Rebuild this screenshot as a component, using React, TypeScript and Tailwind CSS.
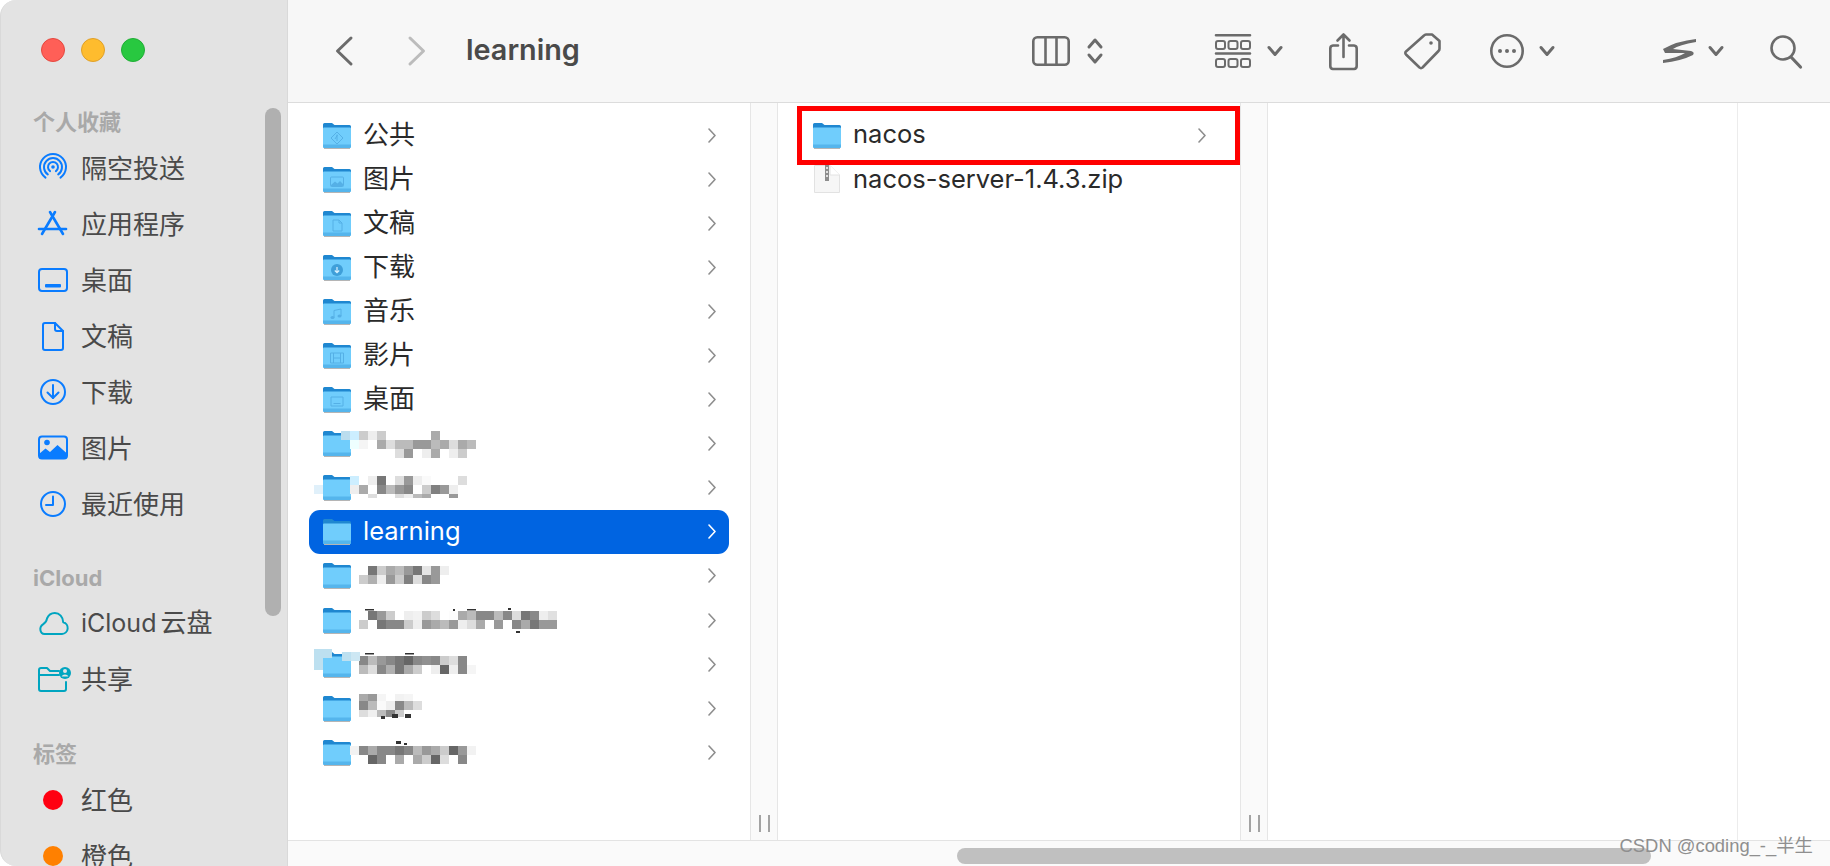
import type { ReactNode } from "react";

const BLUE = "#0a7cff";
const TEAL = "#00a5c0";
const TOOL = "#6b6b6b";

// icons for the sidebar, all in a 30x30 box
function SideIcon({ children, color = BLUE }: { children: ReactNode; color?: string }) {
  return (
    <svg width="30" height="30" viewBox="0 0 30 30" fill="none" stroke={color} strokeWidth="2" strokeLinecap="round" strokeLinejoin="round" className="shrink-0 overflow-visible">
      {children}
    </svg>
  );
}

const sideIcons: Record<string, ReactNode> = {
  airdrop: (
    <SideIcon>
      <path d="M7.5 24.6A13 13 0 1 1 22.5 24.6" />
      <path d="M9.8 21.4A9 9 0 1 1 20.2 21.4" />
      <path d="M12.1 18.1A5 5 0 1 1 17.9 18.1" />
      <circle cx="15" cy="14" r="1.8" fill={BLUE} stroke="none" />
    </SideIcon>
  ),
  apps: (
    <SideIcon>
      <g strokeWidth="2.6">
        <path d="M12 3L25 25" />
        <path d="M17 3L4 25" />
        <path d="M1 20H28" />
      </g>
    </SideIcon>
  ),
  desktop: (
    <SideIcon>
      <rect x="1" y="4" width="28" height="22" rx="3" />
      <rect x="7" y="19" width="16" height="3.6" rx="1" fill={BLUE} stroke="none" />
    </SideIcon>
  ),
  doc: (
    <SideIcon>
      <path d="M7 2H17L25 10V27A2 2 0 0 1 23 29H7A2 2 0 0 1 5 27V4A2 2 0 0 1 7 2Z" />
      <path d="M17 2V8A2 2 0 0 0 19 10H25" />
    </SideIcon>
  ),
  download: (
    <SideIcon>
      <circle cx="15" cy="15" r="12" />
      <path d="M15 8V21" />
      <path d="M9.5 15.5L15 21L20.5 15.5" />
    </SideIcon>
  ),
  photo: (
    <SideIcon>
      <rect x="1" y="3.5" width="28" height="22" rx="3" />
      <circle cx="9" cy="9.5" r="2.8" fill={BLUE} stroke="none" />
      <path d="M1 21L7.5 15.5L12 19L19.5 12L29 20.5V24A2 2 0 0 1 27 26H3A2 2 0 0 1 1 24Z" fill={BLUE} stroke="none" />
    </SideIcon>
  ),
  clock: (
    <SideIcon>
      <circle cx="15" cy="15" r="12" />
      <path d="M15 7.5V16H8" />
    </SideIcon>
  ),
  cloud: (
    <SideIcon color={TEAL}>
      <path d="M6.5 26H24A6 6 0 0 0 25.2 14.2C25 9 21.5 5 16.8 5C13 5 10.3 7.3 9 10.5C8.7 13 8 14.4 5 16.3C0.8 19 1.8 26 6.5 26Z" />
    </SideIcon>
  ),
  shared: (
    <SideIcon color={TEAL}>
      <path d="M1 8V25A2 2 0 0 0 3 27H26A2 2 0 0 0 28 25V18" />
      <path d="M1 8V6A2 2 0 0 1 3 4H9L12 7H21" />
      <path d="M1 11H21" />
      <circle cx="27" cy="9" r="6" fill={TEAL} stroke="none" />
      <circle cx="27" cy="7" r="2" fill="#e3e3e3" stroke="none" />
      <path d="M23.6 12.4A3.6 3 0 0 1 30.4 12.4Z" fill="#e3e3e3" stroke="none" />
    </SideIcon>
  ),
};

type SideRow = { kind: "head"; label: string; h: string; pb: string } | { kind: "item"; label: ReactNode; icon: ReactNode };

const sideRows: SideRow[] = [
  { kind: "head", label: "个人收藏", h: "h-[40px]", pb: "pb-[4px]" },
  { kind: "item", label: "隔空投送", icon: sideIcons.airdrop },
  { kind: "item", label: "应用程序", icon: sideIcons.apps },
  { kind: "item", label: "桌面", icon: sideIcons.desktop },
  { kind: "item", label: "文稿", icon: sideIcons.doc },
  { kind: "item", label: "下载", icon: sideIcons.download },
  { kind: "item", label: "图片", icon: sideIcons.photo },
  { kind: "item", label: "最近使用", icon: sideIcons.clock },
  { kind: "head", label: "iCloud", h: "h-[63px]", pb: "pb-[3px]" },
  {
    kind: "item",
    label: (
      <>
        <span className="text-[25px] mr-[4px]">iCloud</span>云盘
      </>
    ),
    icon: sideIcons.cloud,
  },
  { kind: "item", label: "共享", icon: sideIcons.shared },
  { kind: "head", label: "标签", h: "h-[65px]", pb: "pb-[4px]" },
  { kind: "item", label: "红色", icon: <div className="w-[20px] h-[20px] mx-[5px] shrink-0 rounded-full bg-[#ff0011]" /> },
  { kind: "item", label: "橙色", icon: <div className="w-[20px] h-[20px] mx-[5px] shrink-0 rounded-full bg-[#ff8000]" /> },
];

function Sidebar() {
  return (
    <aside className="relative w-[288px] shrink-0 h-full overflow-hidden rounded-l-[16px] bg-[#e3e3e3] border-l border-r border-[#d9d9d9]">
      {/* traffic lights */}
      <div className="h-[100px] flex items-center gap-[16px] pl-[40px]">
        <div className="w-[24px] h-[24px] rounded-full bg-[#ff5f57] border border-[#e5483f]" />
        <div className="w-[24px] h-[24px] rounded-full bg-[#febc2e] border border-[#e0a028]" />
        <div className="w-[24px] h-[24px] rounded-full bg-[#28c840] border border-[#20ae35]" />
      </div>
      {sideRows.map((r, i) =>
        r.kind === "head" ? (
          <div key={i} className={`${r.h} ${r.pb} flex items-end pl-[32px] text-[22px] leading-[28px] font-bold text-[#a9a9a9]`}>
            {r.label}
          </div>
        ) : (
          <div key={i} className="h-[56px] flex items-center gap-[13px] pl-[37px] text-[26px] text-[#4a4a4a] whitespace-nowrap">
            {r.icon}
            <span>{r.label}</span>
          </div>
        )
      )}
      {/* scrollbar */}
      <div className="absolute left-[264px] top-[108px] w-[16px] h-[508px] rounded-full bg-[#b0b0b0]" />
    </aside>
  );
}

const G = "#55b0e6";

const folderGlyphs: Record<string, ReactNode> = {
  apps: (
    <g fill="none" stroke={G} strokeWidth="1">
      <path d="M14 10L20 16L14 22L8 16Z" />
      <path d="M14 12.5V19M12 17L14.5 13" />
    </g>
  ),
  pic: (
    <g stroke={G} strokeWidth="1" fill="none">
      <rect x="7.5" y="11" width="13" height="9.5" rx="1" />
      <path d="M8 19L12 15.5L14.5 17.5L17 15L20 18V20H8Z" fill={G} stroke="none" />
    </g>
  ),
  doc: <path d="M10 10H16L19 13V21H10ZM16 10V13H19" fill="none" stroke={G} strokeWidth="1" />,
  down: (
    <g>
      <circle cx="14" cy="16" r="6" fill="#3f9fd9" />
      <path d="M14 13V18.5M11.8 16.5L14 18.7L16.2 16.5" fill="none" stroke="#d8f1ff" strokeWidth="1.2" />
    </g>
  ),
  music: (
    <g fill={G}>
      <path d="M11 19.5V12.5L18 11V18" fill="none" stroke={G} strokeWidth="1" />
      <ellipse cx="9.5" cy="19.5" rx="2" ry="1.5" />
      <ellipse cx="16.5" cy="18" rx="2" ry="1.5" />
    </g>
  ),
  film: <path d="M7.5 11H20.5V21H7.5ZM10.5 11V21M17.5 11V21M10.5 16H17.5" fill="none" stroke={G} strokeWidth="1" />,
  desk: <path d="M8 11H20V20H8ZM10.5 17.5H17.5" fill="none" stroke={G} strokeWidth="1" />,
};

function Folder({ glyph }: { glyph?: string }) {
  return (
    <svg width="28" height="27" viewBox="0 0 28 27" className="shrink-0">
      <path d="M0 2.5A1.5 1.5 0 0 1 1.5 1H9L11.5 3H26.5A1.5 1.5 0 0 1 28 4.5V12H0Z" fill="#1f87d0" />
      <path d="M0 6.5A1 1 0 0 1 1 5.5H27A1 1 0 0 1 28 6.5V24.5A1.5 1.5 0 0 1 26.5 26H1.5A1.5 1.5 0 0 1 0 24.5Z" fill="#70cdfc" />
      <path d="M0 22.5H28V24.5A1.5 1.5 0 0 1 26.5 26H1.5A1.5 1.5 0 0 1 0 24.5Z" fill="#55b5ec" />
      <path d="M1 26.5H27" stroke="#b5b5b5" strokeWidth="1" />
      {glyph && folderGlyphs[glyph]}
    </svg>
  );
}

function Chevron({ color = "#8e8e8e" }: { color?: string }) {
  return (
    <svg width="8" height="15" viewBox="0 0 8 15" fill="none" stroke={color} strokeWidth="1.6" strokeLinecap="round" strokeLinejoin="round" className="shrink-0">
      <path d="M1 1L7 7.5L1 14" />
    </svg>
  );
}

function ZipIcon() {
  return (
    <svg width="26" height="28" viewBox="0 0 26 28" className="shrink-0">
      <path d="M0.5 0.5H16L25.5 10V27.5H0.5Z" fill="#f6f6f6" stroke="#e2e2e2" />
      <path d="M16 0.5V10H25.5" fill="#ffffff" stroke="#e2e2e2" />
      <rect x="11" y="0" width="4" height="16" fill="#8d8d8d" />
      <rect x="12" y="2" width="2" height="2" fill="#e0e0e0" />
      <rect x="12" y="6" width="2" height="2" fill="#e0e0e0" />
      <rect x="12" y="10" width="2" height="2" fill="#e0e0e0" />
    </svg>
  );
}

type ListRow = { label?: string; glyph?: string; selected?: boolean };

const firstColumn: ListRow[] = [
  { label: "公共", glyph: "apps" },
  { label: "图片", glyph: "pic" },
  { label: "文稿", glyph: "doc" },
  { label: "下载", glyph: "down" },
  { label: "音乐", glyph: "music" },
  { label: "影片", glyph: "film" },
  { label: "桌面", glyph: "desk" },
  {},
  {},
  { label: "learning", selected: true },
  {},
  {},
  {},
  {},
  {},
];

// mosaic over the blurred folder names, page coordinates: [y, height, first x, cell colours]
const mosaic: [number, number, number, string][] = [
  [431, 9, 341, "bde cef ccc eee ccc fff - - - - aaa - - fff"],
  [440, 9, 350, "eff f5f5f5 - aaa ddd bbb bbb 999 999 bbb aaa ddd aaa bbb"],
  [449, 9, 395, "ddd 999 - eee aaa - eee ccc fff"],
  [476, 9, 350, "cef - eee 777 fff ddd 999 eee fafafa - - - ddd"],
  [485, 9, 350, "eee aaa fff 888 bbb 999 888 fff ccc 808080 999 eee"],
  [494, 4, 368, "ddd - - ddd eee bbb aaa - - 999"],
  [485, 9, 314, "e0f0fa"],
  [566, 9, 368, "777 ccc aaa bbb 999 777 e5e5e5 999 eee"],
  [575, 9, 359, "ccc b0b0b0 eee 999 ccc 808080 ddd 888 999"],
  [611, 9, 368, "777 999 ccc - eee f2f2f2 ccc ddd - fcfcfc aaa bbb 888 888 bbb 888 ddd 777 888 eee e0e0e0"],
  [620, 9, 359, "ccc - 777 888 888 ccc eee 999 aaa bbb 999 eee ddd aaa - 999 - 888 aaa 777 999 999"],
  [656, 9, 359, "888 bbb 999 888 777 666 888 909090 888 ccc ddd 888"],
  [665, 9, 359, "bbb ddd 888 b0b0b0 777 aaa ccc - eee 666 eee 888 f5f5f5"],
  [649, 9, 314, "bde0f0 bde0f0"],
  [658, 12, 314, "bde0f0"],
  [652, 9, 342, "bde0f0 cde7f3"],
  [694, 7, 359, "aaa 999 f5f5f5 - f2f2f2 f5f5f5"],
  [701, 9, 359, "888 bbb fafafa eee 888 bbb ddd"],
  [710, 7, 359, "ddd f0f0f0 bbb 888 ccc"],
  [746, 9, 350, "f2f2f2 888 aaa 888 888 777 888 bbb 999 aaa ccc 666 999 f2f2f2"],
  [755, 9, 368, "666 888 - aaa - aaa ccc 666 ddd - 888"],
];

// dark specks of letters that stick out of the mosaic
const specks: [number, number, number, number][] = [
  [365, 609, 9, 1.5],
  [453, 609, 2, 2],
  [467, 609, 9, 1.5],
  [508, 608, 3, 2],
  [365, 653, 9, 1.5],
  [405, 653, 9, 1.5],
  [381, 716, 4, 3],
  [392, 714, 6, 4],
  [405, 714, 6, 4],
  [396, 741, 5, 3],
  [404, 743, 3, 2],
  [516, 631, 4, 2],
];

function Mosaic() {
  return (
    <svg width="462" height="738" viewBox="288 103 462 738" className="absolute left-0 top-0 pointer-events-none">
      {mosaic.map(([y, h, x0, cells], i) =>
        cells.split(" ").map((c, j) =>
          c === "-" ? null : <rect key={`${i}-${j}`} x={x0 + j * 9} y={y} width="9" height={h} fill={`#${c}`} />
        )
      )}
      {specks.map(([x, y, w, h], i) => (
        <rect key={i} x={x} y={y} width={w} height={h} fill="#333333" />
      ))}
    </svg>
  );
}

function Row({ row }: { row: ListRow }) {
  return (
    <div
      className={`h-[44.1px] mx-[21px] pl-[14px] pr-[13px] flex items-center rounded-[11px] ${
        row.selected ? "bg-[#0064e1] text-white" : "text-[#2a2a2a]"
      }`}
    >
      <Folder glyph={row.glyph} />
      <span className="ml-[12px] flex-1 pb-[2px] text-[26px] whitespace-nowrap">
        {row.label && /^[a-z]/.test(row.label) ? <span className="text-[25.5px]">{row.label}</span> : row.label}
      </span>
      <Chevron color={row.selected ? "#ffffff" : "#8e8e8e"} />
    </div>
  );
}

function ResizeBar() {
  return (
    <div className="w-[28px] shrink-0 bg-[#fafafa] border-x border-[#e6e6e6] flex items-end justify-center gap-[7px] pb-[8px]">
      <div className="w-[2px] h-[17px] bg-[#a3a3a3]" />
      <div className="w-[2px] h-[17px] bg-[#a3a3a3]" />
    </div>
  );
}

function Tool({ ml, w, h, children, view }: { ml: string; w: number; h: number; children: ReactNode; view?: string }) {
  return (
    <svg
      width={w}
      height={h}
      viewBox={view ?? `0 0 ${w} ${h}`}
      fill="none"
      stroke={TOOL}
      strokeWidth="2.6"
      strokeLinecap="round"
      strokeLinejoin="round"
      className={`${ml} shrink-0 overflow-visible`}
    >
      {children}
    </svg>
  );
}

function DownChevron({ ml }: { ml: string }) {
  return (
    <Tool ml={ml} w={16} h={10} view="0 0 16 10">
      <path d="M2 1.5L8 8.5L14 1.5" strokeWidth="3" />
    </Tool>
  );
}

function Toolbar() {
  return (
    <header className="h-[103px] shrink-0 bg-[#f7f7f7] border-b border-[#dcdcdc] flex items-center text-[#4a4a4a]">
      <Tool ml="ml-[48px]" w={16} h={28}>
        <path d="M15 1L1.5 14L15 27" strokeWidth="3" />
      </Tool>
      <Tool ml="ml-[57px]" w={16} h={28}>
        <path d="M1 1L14.5 14L1 27" stroke="#bcbcbc" strokeWidth="3" />
      </Tool>
      <h1 className="ml-[41px] w-[114px] pb-[3px] text-[28.8px] font-semibold whitespace-nowrap">learning</h1>
      {/* column view */}
      <Tool ml="ml-[452px]" w={38} h={30}>
        <rect x="1.3" y="1.3" width="35.4" height="27.4" rx="4" />
        <path d="M13.5 1.3V28.7M24.5 1.3V28.7" />
      </Tool>
      <Tool ml="ml-[17px]" w={16} h={26}>
        <path d="M2 9L8 2L14 9M2 17L8 24L14 17" strokeWidth="3" />
      </Tool>
      {/* group */}
      <Tool ml="ml-[112px]" w={36} h={34}>
        <path d="M1 1.3H35M1 19.5H35" />
        <g strokeWidth="2">
          <rect x="1" y="7" width="9" height="8" rx="2" />
          <rect x="13.5" y="7" width="9" height="8" rx="2" />
          <rect x="26" y="7" width="9" height="8" rx="2" />
          <rect x="1" y="25" width="9" height="8" rx="2" />
          <rect x="13.5" y="25" width="9" height="8" rx="2" />
          <rect x="26" y="25" width="9" height="8" rx="2" />
        </g>
      </Tool>
      <DownChevron ml="ml-[16px]" />
      {/* share */}
      <Tool ml="ml-[46px]" w={29} h={37}>
        <path d="M9 12.5H4A3 3 0 0 0 1.3 15.5V33A3 3 0 0 0 4 36H25A3 3 0 0 0 27.7 33V15.5A3 3 0 0 0 25 12.5H20" />
        <path d="M14.5 24V1.5M8.5 7.5L14.5 1.5L20.5 7.5" />
      </Tool>
      {/* tag */}
      <Tool ml="ml-[46px]" w={37} h={37}>
        <path d="M2 18.5L20 2.5A3 3 0 0 1 22 1.5H28L35.5 8V15.5A3 3 0 0 1 34.5 18L18.5 34.5A2 2 0 0 1 15.5 34.5L2 21.5A2 2 0 0 1 2 18.5Z" />
        <circle cx="27" cy="10" r="1.8" fill={TOOL} stroke="none" />
      </Tool>
      {/* more */}
      <Tool ml="ml-[49px]" w={34} h={34}>
        <circle cx="17" cy="17" r="15.7" />
        <circle cx="10" cy="17" r="2" fill={TOOL} stroke="none" />
        <circle cx="17" cy="17" r="2" fill={TOOL} stroke="none" />
        <circle cx="24" cy="17" r="2" fill={TOOL} stroke="none" />
      </Tool>
      <DownChevron ml="ml-[15px]" />
      {/* swoosh */}
      <Tool ml="ml-[108px]" w={33} h={24}>
        <path d="M0 10Q14 2 33 0V3Q16 6 10 10L28 12Q32 13 30 16Q18 22 0 24V21Q14 19 22 14L2 14Z" fill={TOOL} stroke="none" />
      </Tool>
      <DownChevron ml="ml-[12px]" />
      {/* search */}
      <Tool ml="ml-[46px]" w={32} h={33}>
        <circle cx="13" cy="13" r="11.5" />
        <path d="M21 22L30.5 32" strokeWidth="3.2" />
      </Tool>
    </header>
  );
}

export default function App() {
  return (
    <div className="relative w-[1830px] h-[866px] flex overflow-hidden bg-white font-['Inter','Noto_Sans_CJK_SC',sans-serif]">
      <Sidebar />
      <main className="flex-1 min-w-0 flex flex-col">
        <Toolbar />
        {/* columns */}
        <div className="flex-1 min-h-0 flex">
          <section className="relative w-[462px] shrink-0 pt-[10px]">
            {firstColumn.map((row, i) => (
              <Row key={i} row={row} />
            ))}
            <Mosaic />
          </section>
          <ResizeBar />
          <section className="relative w-[462px] shrink-0 pt-[10px]">
            <Row row={{ label: "nacos" }} />
            <div className="h-[44.1px] mx-[21px] pl-[15px] flex items-center text-[#2a2a2a]">
              <ZipIcon />
              <span className="ml-[13px] text-[25.5px] whitespace-nowrap">nacos-server-1.4.3.zip</span>
            </div>
            {/* red annotation */}
            <div className="absolute left-[19px] top-[3px] w-[443px] h-[59px] border-[5px] border-[#ff0000]" />
          </section>
          <ResizeBar />
          <section className="w-[470px] shrink-0 border-r border-[#ececec]" />
          <section className="flex-1" />
        </div>
        {/* horizontal scrollbar */}
        <div className="h-[26px] shrink-0 bg-[#fafafa] border-t border-[#e3e3e3] pt-[7px] pl-[669px]">
          <div className="w-[694px] h-[16px] rounded-full bg-[#c0c0c0]" />
        </div>
      </main>
      {/* watermark */}
      <div className="absolute right-[17px] bottom-[10px] text-[18.4px] leading-[20px] text-[#8f8f8f] whitespace-nowrap font-['Liberation_Sans','Noto_Sans_CJK_SC',sans-serif]">
        CSDN @coding_-_半生
      </div>
    </div>
  );
}
